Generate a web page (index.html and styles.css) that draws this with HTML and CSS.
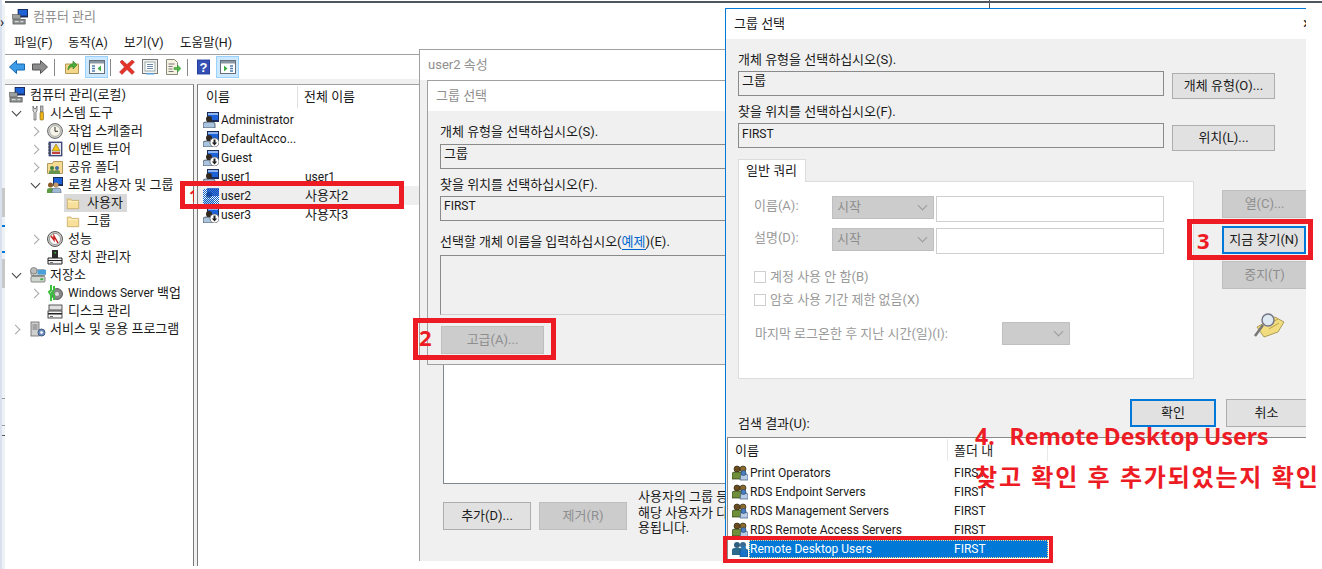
FILE: index.html
```html
<!DOCTYPE html>
<html lang="ko">
<head>
<meta charset="utf-8">
<title>컴퓨터 관리</title>
<link rel="stylesheet" href="styles.css">
</head>
<body>
<svg class="sprite" xmlns="http://www.w3.org/2000/svg">
  <defs>
    <pattern id="dith" width="2" height="2" patternUnits="userSpaceOnUse"><rect width="2" height="2" fill="#fff"/><rect width="1" height="1" fill="#0a5fc4"/><rect x="1" y="1" width="1" height="1" fill="#0a5fc4"/></pattern>
  </defs>
  <symbol id="i-user" viewBox="0 0 16 16">
    <rect x="4" y="0" width="12" height="10" fill="#1c2c58"/><rect x="5" y="1" width="10" height="7" fill="#1e62d8"/><rect x="5" y="1" width="10" height="2" fill="#8fb4ee"/>
    <path d="M0 16V12q0-2 3-2h6q3 0 3 2v4z" fill="#a9c4dc" stroke="#3c4a5a" stroke-width=".8"/>
    <circle cx="6" cy="7" r="3" fill="#33291f"/>
  </symbol>
  <symbol id="i-user-down" viewBox="0 0 16 16">
    <use href="#i-user"/>
    <circle cx="11.5" cy="11.5" r="4.5" fill="#fff" stroke="#555" stroke-width=".7"/>
    <path d="M10.5 8.5h2v3h1.700l-2.700 3-2.700-3h1.700z" fill="#222"/>
  </symbol>
  <symbol id="i-user-sel" viewBox="0 0 16 16">
    <rect y="1" width="16" height="15" fill="url(#dith)"/><rect x="4" y="0" width="12" height="8" fill="#0a48c0" opacity=".75"/><circle cx="6" cy="7" r="3" fill="#083a90" opacity=".7"/><rect x="1" y="11" width="10" height="5" fill="#0a5fc4" opacity=".35"/>
  </symbol>
  <symbol id="i-group" viewBox="0 0 16 16">
    <circle cx="5" cy="4" r="3" fill="#6b4a1e" stroke="#2c2a16" stroke-width=".7"/><circle cx="11" cy="4" r="3" fill="#8a6a2e" stroke="#2c2a16" stroke-width=".7"/>
    <path d="M0 14V9q0-2 3-2h5q3 0 3 2v5z" fill="#6f8f3a" stroke="#2c3a16" stroke-width=".7"/>
    <path d="M9 9h4q3 0 3 2v4H8z" fill="#b7cbe4" stroke="#3a5a80" stroke-width=".7"/>
    <circle cx="11.500" cy="8" r="2.500" fill="#4a7ec0" stroke="#20406a" stroke-width=".6"/>
  </symbol>
  <symbol id="i-group-sel" viewBox="0 0 16 16">
    <circle cx="5" cy="4" r="3" fill="#2f5f80"/><circle cx="11" cy="4" r="3" fill="#376a94"/>
    <path d="M0 14V9q0-2 3-2h5q3 0 3 2v5z" fill="#2c6a8c"/>
    <path d="M8 10q0-2 3-2h2q3 0 3 2v6H8z" fill="#1673c8" stroke="#12466e" stroke-width=".6"/>
    <circle cx="11.500" cy="7.500" r="2.500" fill="#2a78b8"/>
  </symbol>
  <symbol id="i-folder" viewBox="0 0 16 16">
    <path d="M1.500 14.500v-11h4l1 1.500h8v9.500z" fill="#f9e09a" stroke="#c8ad6a"/><rect x="2" y="6" width="12" height="1" fill="#fff3cb"/>
  </symbol>
  <symbol id="i-pc" viewBox="0 0 17 17">
    <rect x="6" y="0" width="11" height="9" fill="#1c2c58"/><rect x="7" y="1" width="9" height="6" fill="#1e62d8"/>
    <rect x="0" y="6" width="9" height="4" fill="#9aa0a0" stroke="#444" stroke-width=".6"/><rect x="1" y="11" width="13" height="5" fill="#8a8f8f" stroke="#444" stroke-width=".6"/><rect x="3" y="13" width="4" height="1" fill="#eee"/><rect x="9" y="13" width="3" height="1" fill="#eee"/>
  </symbol>
  <symbol id="i-tools" viewBox="0 0 16 16">
    <path d="M3 1v5l1 1v8h2V7l1-1V1L6 3.500H4z" fill="#ddd" stroke="#555" stroke-width=".7"/>
    <rect x="10.500" y="1" width="2.500" height="6" fill="#bbb" stroke="#555" stroke-width=".6"/><rect x="10" y="7" width="3.500" height="8" rx="1" fill="#edb41c" stroke="#7c5c10" stroke-width=".6"/>
  </symbol>
  <symbol id="i-clock" viewBox="0 0 16 16">
    <circle cx="8" cy="8" r="7.400" fill="#d4d4d0" stroke="#666"/><circle cx="8" cy="8" r="5.400" fill="#f6f4e8" stroke="#999" stroke-width=".7"/><path d="M8 4v4.300h3" fill="none" stroke="#333"/>
  </symbol>
  <symbol id="i-event" viewBox="0 0 16 16">
    <rect x="2" y="1" width="13" height="14" fill="#4c5a90" stroke="#2c3460" stroke-width=".7"/><rect x="4" y="2" width="10" height="12" fill="#e4e6f0"/><path d="M1 3h2M1 6h2M1 9h2M1 12h2" stroke="#444"/><path d="M9 3l4 7H5z" fill="#f5c518" stroke="#8a6a10" stroke-width=".6"/><rect x="5" y="11" width="8" height="2" fill="#c04040"/>
  </symbol>
  <symbol id="i-share" viewBox="0 0 16 16">
    <path d="M.5 14.500v-10h5l1-2h9v12z" fill="#f6dc92" stroke="#b09a60"/>
    <circle cx="5" cy="9" r="2" fill="#3f7f3f"/><circle cx="10" cy="9" r="2" fill="#3f6fa8"/><path d="M2 15v-2q0-2 3-2t3 2v2zM7 15v-2q0-2 3-2t3 2v2z" fill="#67934f"/>
  </symbol>
  <symbol id="i-users" viewBox="0 0 16 16">
    <rect x="6" y="0" width="10" height="9" fill="#1c2c58"/><rect x="7" y="1" width="8" height="6" fill="#1e62d8"/>
    <circle cx="3.500" cy="8" r="2.500" fill="#8a5a2a"/><path d="M0 16v-3q0-2 3-2h2q2 0 2 2v3z" fill="#5f9a45"/>
    <circle cx="9" cy="8" r="2.500" fill="#c59868"/><path d="M5 16v-2q0-3 3-3h3q3 0 3 3v2z" fill="#9fb8d4" stroke="#456" stroke-width=".5"/>
  </symbol>
  <symbol id="i-perf" viewBox="0 0 16 16">
    <circle cx="8" cy="8" r="7.500" fill="#cfcfc8" stroke="#555"/><circle cx="8" cy="8" r="5.500" fill="#fff" stroke="#777" stroke-width=".7"/><path d="M4 5l3 4V5l4 7" fill="none" stroke="#c8201c" stroke-width="1.500"/>
  </symbol>
  <symbol id="i-device" viewBox="0 0 16 16">
    <rect x="5" y="1" width="6" height="9" fill="#2a2a2a"/><rect x="7.500" y="3" width="1.500" height="1.500" fill="#3fc04a"/><path d="M1 9h14v6H1z" fill="#f0f0f0" stroke="#222"/><rect x="1" y="11" width="14" height="1" fill="#222"/><rect x="3" y="13" width="3" height="1" fill="#777"/>
  </symbol>
  <symbol id="i-store" viewBox="0 0 17 17">
    <rect x="1" y="3" width="15" height="6" rx="1" fill="#cfd6cf" stroke="#555" stroke-width=".7"/><rect x="1" y="10" width="15" height="6" rx="1" fill="#cfd6cf" stroke="#555" stroke-width=".7"/><circle cx="4" cy="4" r="3.500" fill="#bcbcbc" stroke="#666" stroke-width=".7"/><rect x="8" y="3" width="9" height="5" fill="#4aa0d8"/><rect x="11" y="12" width="3" height="2" fill="#3fae46"/>
  </symbol>
  <symbol id="i-backup" viewBox="0 0 16 16">
    <circle cx="10" cy="9" r="5.500" fill="#888" stroke="#333" stroke-width=".7"/><circle cx="10" cy="9" r="2" fill="#ddd"/><path d="M4 0v5l-2 2 2 3V16M7 1v4l-2 3 2 2v5" fill="none" stroke="#3ac03c" stroke-width="2"/>
  </symbol>
  <symbol id="i-disk" viewBox="0 0 16 16">
    <rect x="2" y="2" width="13" height="5" fill="#e0e0e0" stroke="#333" stroke-width=".8"/><rect x="1" y="8" width="14" height="7" fill="#f4f4f4" stroke="#222" stroke-width=".8"/><rect x="1" y="10" width="14" height="1.500" fill="#222"/><rect x="3" y="13" width="3" height="1" fill="#666"/>
  </symbol>
  <symbol id="i-service" viewBox="0 0 16 16">
    <rect x="1" y="1" width="8" height="14" fill="#cfcfcf" stroke="#666" stroke-width=".8"/><path d="M2.500 4h5M2.500 6h5M2.500 8h5" stroke="#777"/><circle cx="11.500" cy="11.500" r="3.500" fill="#6f8fb8" stroke="#3c5a84"/><circle cx="11.500" cy="11.500" r="1.300" fill="#fff"/>
  </symbol>
  <symbol id="i-search" viewBox="0 0 32 26">
    <path d="M4 15L22 5l9 5-6 10-14 5z" fill="#f2dc80" stroke="#9a8a40" stroke-width=".8"/><path d="M14 13l11-6M16 17l10-6" stroke="#b8a048"/>
    <circle cx="15" cy="8" r="6" fill="#dfe9f2" stroke="#778" stroke-width="1.500"/><path d="M10 13L2 24" stroke="#777" stroke-width="2.500"/>
  </symbol>
</svg>

<div class="desk">
  <div class="topline"></div>
  <div class="topmark"></div>
  <div class="edge"><span class="edge-chev">›</span></div>

  <section class="win win-main">
    <header class="main-title"><svg class="ic16"><use href="#i-pc"/></svg><span>컴퓨터 관리</span></header>
    <nav class="menu"><span>파일(F)</span><span>동작(A)</span><span>보기(V)</span><span>도움말(H)</span></nav>
    <div class="toolbar">
      <svg class="tool-back" viewBox="0 0 16 14"><path d="M.5 7L7.500.5V4h8v6h-8v3.500z" fill="#3b9be6" stroke="#1668b0"/></svg>
      <svg class="tool-fwd" viewBox="0 0 16 14"><path d="M15.500 7L8.500.5V4h-8v6h8v3.500z" fill="#8c8c8c" stroke="#555"/></svg>
      <i class="sep"></i>
      <svg class="tool-up" viewBox="0 0 16 16"><path d="M1.500 14.500V5h13v9.500z" fill="#f3d68a" stroke="#b49a55"/><path d="M4 11c0-4 2-6 5-6V2l4 4-4 4V7.500C7 7.500 5 9 4 11z" fill="#4cae3a" stroke="#2b7a24" stroke-width=".6"/></svg>
      <span class="toggle"><svg viewBox="0 0 16 14"><rect x=".5" y=".5" width="15" height="13" fill="#fff" stroke="#67707a"/><rect x="1" y="1" width="14" height="2.500" fill="#8a96a2"/><path d="M3 6h3M3 8.500h3M3 11h3" stroke="#4f7eb0" stroke-width="1.300"/><path d="M12 5.500v6l-3.500-3z" fill="#3fae46"/></svg></span>
      <i class="sep"></i>
      <svg class="tool-x" viewBox="0 0 16 16"><path d="M1 3l2-2 5 4.500L13 1l2.500 2L10.500 8l5 5-2.500 2.500L8 10.500 3 15.500 .5 13l5-5z" fill="#e5332a" stroke="#a8201c" stroke-width=".5"/></svg>
      <svg class="tool-doc" viewBox="0 0 16 16"><rect x=".5" y=".5" width="15" height="14" fill="#f2f2ee" stroke="#777"/><rect x="3" y="3" width="10" height="9" fill="#fff" stroke="#9aa"/><path d="M5 5.500h6M5 7.500h6M5 9.500h6" stroke="#6f8aa8"/><rect x="4" y="14" width="8" height="1.500" fill="#5aa0dc"/></svg>
      <svg class="tool-exp" viewBox="0 0 16 16"><path d="M1.500.5h8l3 3V15.500h-11z" fill="#f6f2e2" stroke="#8a8a7a"/><path d="M3.500 5h6M3.500 7.500h4M3.500 10h4M3.500 12.500h5" stroke="#777"/><path d="M9 8.500h3.500V6l3.500 3.500-3.500 3.500v-2.500H9z" fill="#4cbc46" stroke="#2b8a2a" stroke-width=".5"/></svg>
      <i class="sep"></i>
      <svg class="tool-help" viewBox="0 0 14 16"><rect width="14" height="16" fill="#23409c"/><rect x="1" y="1" width="12" height="14" fill="#3550b4"/><text x="7" y="13" text-anchor="middle" class="qm">?</text></svg>
      <span class="toggle"><svg viewBox="0 0 16 14"><rect x=".5" y=".5" width="15" height="13" fill="#fff" stroke="#67707a"/><rect x="1" y="1" width="14" height="2.500" fill="#8a96a2"/><path d="M10 6h3M10 8.500h3M10 11h3" stroke="#4f7eb0" stroke-width="1.300"/><path d="M4 5.500v6l3.500-3z" fill="#3fae46"/></svg></span>
    </div>
    <div class="main-body">
      <ul class="tree">
        <li class="lv0"><svg class="ic16"><use href="#i-pc"/></svg><span>컴퓨터 관리(로컬)</span></li>
        <li class="lv1"><i class="chev down"></i><svg class="ic16"><use href="#i-tools"/></svg><span>시스템 도구</span></li>
        <li class="lv2"><i class="chev"></i><svg class="ic16"><use href="#i-clock"/></svg><span>작업 스케줄러</span></li>
        <li class="lv2"><i class="chev"></i><svg class="ic16"><use href="#i-event"/></svg><span>이벤트 뷰어</span></li>
        <li class="lv2"><i class="chev"></i><svg class="ic16"><use href="#i-share"/></svg><span>공유 폴더</span></li>
        <li class="lv2"><i class="chev down"></i><svg class="ic16"><use href="#i-users"/></svg><span>로컬 사용자 및 그룹</span></li>
        <li class="lv3"><span class="tsel"><svg class="ic14"><use href="#i-folder"/></svg><span>사용자</span></span></li>
        <li class="lv3"><span class="tnosel"><svg class="ic14"><use href="#i-folder"/></svg><span>그룹</span></span></li>
        <li class="lv2"><i class="chev"></i><svg class="ic16"><use href="#i-perf"/></svg><span>성능</span></li>
        <li class="lv2"><i class="chev blank"></i><svg class="ic16"><use href="#i-device"/></svg><span>장치 관리자</span></li>
        <li class="lv1"><i class="chev down"></i><svg class="ic16"><use href="#i-store"/></svg><span>저장소</span></li>
        <li class="lv2"><i class="chev"></i><svg class="ic16"><use href="#i-backup"/></svg><span><span class="en">Windows Server</span> 백업</span></li>
        <li class="lv2"><i class="chev blank"></i><svg class="ic16"><use href="#i-disk"/></svg><span>디스크 관리</span></li>
        <li class="lv1"><i class="chev"></i><svg class="ic16"><use href="#i-service"/></svg><span>서비스 및 응용 프로그램</span></li>
      </ul>
      <div class="users">
        <div class="users-head"><span class="c1">이름</span><span class="c2">전체 이름</span></div>
        <div class="urow"><svg class="ic16"><use href="#i-user"/></svg><span class="c1 en">Administrator</span></div>
        <div class="urow"><svg class="ic16"><use href="#i-user-down"/></svg><span class="c1 en">DefaultAcco...</span></div>
        <div class="urow"><svg class="ic16"><use href="#i-user-down"/></svg><span class="c1 en">Guest</span></div>
        <div class="urow"><svg class="ic16"><use href="#i-user"/></svg><span class="c1 en">user1</span><span class="en">user1</span></div>
        <div class="urow sel"><svg class="ic16"><use href="#i-user-sel"/></svg><span class="c1 en">user2</span><span>사용자2</span></div>
        <div class="urow"><svg class="ic16"><use href="#i-user-down"/></svg><span class="c1 en">user3</span><span>사용자3</span></div>
      </div>
    </div>
  </section>

  <section class="win win-prop">
    <header class="prop-title">user2 속성</header>
    <div class="prop-body">
      <div class="prop-list"></div>
      <div class="prop-foot">
        <button class="btn btn-add">추가(D)...</button>
        <button class="btn off btn-add">제거(R)</button>
        <p class="note">사용자의 그룹 등록 정보 변경 사항은<br>해당 사용자가 다음에 로그온할 때 적<br>용됩니다.</p>
      </div>
    </div>
    <section class="win-sel-back">
      <header class="back-title">그룹 선택</header>
      <div class="back-body">
        <label class="lbl">개체 유형을 선택하십시오(S).</label>
        <div class="field">그룹</div>
        <label class="lbl lbl-2">찾을 위치를 선택하십시오(F).</label>
        <div class="field field-2 en">FIRST</div>
        <label class="lbl lbl-3">선택할 개체 이름을 입력하십시오(<a>예제</a>)(E).</label>
        <div class="namebox"></div>
        <button class="btn off btn-adv">고급(A)...</button>
      </div>
    </section>
  </section>

  <section class="win win-sel">
    <header class="sel-title"><span>그룹 선택</span><span class="close">×</span></header>
    <div class="sel-body">
      <div class="sel-row"><div class="sel-col"><label class="lbl">개체 유형을 선택하십시오(S).</label><div class="field">그룹</div></div><button class="btn btn-side">개체 유형(O)...</button></div>
      <div class="sel-row sel-row-2"><div class="sel-col"><label class="lbl">찾을 위치를 선택하십시오(F).</label><div class="field en">FIRST</div></div><button class="btn btn-side">위치(L)...</button></div>
      <div class="tab">일반 쿼리</div>
      <div class="query-wrap">
        <div class="query">
          <div class="q-row"><span class="q-lbl">이름(A):</span><span class="combo">시작<i class="cv"></i></span><span class="q-input"></span></div>
          <div class="q-row q-row-2"><span class="q-lbl">설명(D):</span><span class="combo">시작<i class="cv"></i></span><span class="q-input"></span></div>
          <div class="q-check q-check-1"><i class="box"></i>계정 사용 안 함(B)</div>
          <div class="q-check q-check-2"><i class="box"></i>암호 사용 기간 제한 없음(X)</div>
          <div class="q-last"><span class="q-last-lbl">마지막 로그온한 후 지난 시간(일)(I):</span><span class="combo combo-s"><i class="cv"></i></span></div>
        </div>
        <div class="q-btns">
          <button class="btn off btn-q">열(C)...</button>
          <button class="btn btn-q focus">지금 찾기(N)</button>
          <button class="btn off btn-q">중지(T)</button>
          <svg class="search-ic"><use href="#i-search"/></svg>
        </div>
      </div>
      <div class="ok-row"><button class="btn focus btn-ok">확인</button><button class="btn btn-cancel">취소</button></div>
      <label class="lbl lbl-res">검색 결과(U):</label>
    </div>
    <div class="results">
      <div class="r-head"><span class="r1">이름</span><span class="r2">폴더 내</span></div>
      <div class="r-row"><span class="r1"><svg class="ic16"><use href="#i-group"/></svg>Print Operators</span><span class="r2">FIRST</span></div>
      <div class="r-row"><span class="r1"><svg class="ic16"><use href="#i-group"/></svg>RDS Endpoint Servers</span><span class="r2">FIRST</span></div>
      <div class="r-row"><span class="r1"><svg class="ic16"><use href="#i-group"/></svg>RDS Management Servers</span><span class="r2">FIRST</span></div>
      <div class="r-row"><span class="r1"><svg class="ic16"><use href="#i-group"/></svg>RDS Remote Access Servers</span><span class="r2">FIRST</span></div>
      <div class="r-row r-sel"><svg class="ic16"><use href="#i-group-sel"/></svg><span class="r-bar"><span class="r1b">Remote Desktop Users</span><span class="r2">FIRST</span></span></div>
    </div>
  </section>

  <div class="mark m1"><b class="num num1">1</b></div>
  <div class="mark m2"><b class="num">2</b></div>
  <div class="mark m3"><b class="num">3</b></div>
  <div class="mark m4"></div>
  <p class="note4">4.&nbsp;&nbsp; Remote Desktop Users</p>
  <p class="note4b">찾고 확인 후 추가되었는지 확인</p>
</div>
</body>
</html>
```

FILE: styles.css
```css
* { box-sizing: border-box; }
html, body { margin: 0; padding: 0; background: #fff; }
body { font: 13px/16px Roboto, "Noto Sans CJK KR", sans-serif; color: #1a1a1a; }
.sprite { position: absolute; width: 0; height: 0; }
svg { display: block; flex: none; }
.ic16 { width: 16px; height: 16px; }
.ic14 { width: 14px; height: 14px; }
.en { font-size: 12px; }
p { margin: 0; }
ul { list-style: none; margin: 0; padding: 0; }
i { display: block; flex: none; }

.desk { position: relative; width: 1322px; height: 569px; overflow: hidden; background: #fff; }
.topline { height: 2px; margin-top: 1px; background: #4d5661; }
.topmark { position: absolute; left: 989px; top: 0; width: 1px; height: 8px; background: #4d5661; }
.edge { position: absolute; left: 0; top: 0; width: 5px; height: 569px; background: linear-gradient(90deg, #d9e1ee 0, #d9e1ee 2px, transparent 2px), linear-gradient(#fff 0, #fff 5px, #eef1f6 5px, #eef1f6 188px, #c8c8c8 188px, #c8c8c8 217px, #eef1f6 217px, #eef1f6 225px, #0078d7 225px, #0078d7 227px, #eef1f6 227px, #eef1f6 251px, #0078d7 251px, #0078d7 253px, #eef1f6 253px, #eef1f6 259px, #c8c8c8 259px, #c8c8c8 288px, #eef1f6 288px, #eef1f6 398px, #9a9a9a 398px, #9a9a9a 399px, #eef1f6 399px, #eef1f6 425px, #9a9a9a 425px, #9a9a9a 426px, #eef1f6 426px, #eef1f6 435px, #555 435px, #555 436px, #eef1f6 436px); }
.edge-chev { position: absolute; left: 0; top: 14px; font-size: 14px; color: #222; width: 5px; overflow: hidden; }

.win { position: absolute; background: #fff; }

/* main console window */
.win-main { left: 5px; top: 3px; width: 420px; height: 566px; }
.main-title { display: flex; align-items: center; gap: 5px; height: 27px; padding-left: 7px; color: #8e8e8e; }
.menu { display: flex; height: 24px; padding: 5px 0 0 9px; font-size: 12.500px; }
.menu span:nth-child(1) { width: 54px; }
.menu span:nth-child(2) { width: 56px; }
.menu span:nth-child(3) { width: 56px; }
.toolbar { display: flex; align-items: center; height: 25px; border-top: 1px solid #a0a0a0; padding-left: 4px; }
.toolbar svg { width: 16px; height: 16px; }
.sep { width: 1px; height: 17px; background: #888; }
.tool-back { margin-right: 7px; }
.tool-fwd { margin-right: 6px; }
.tool-up { margin: 0 5px 0 9px; }
.toggle { display: flex; align-items: center; justify-content: center; width: 23px; height: 22px; background: #cce8ff; border: 1px solid #99d1ff; }
.toggle + .sep { margin-left: 2px; }
.tool-x { margin: 0 7px 0 8px; }
.tool-doc { margin-right: 7px; }
.tool-exp { margin-right: 6px; }
.tool-help { margin: 0 6px 0 9px; width: 13px !important; }
.qm { font: bold 14px "Liberation Sans", sans-serif; fill: #fff; }
.main-body { display: flex; height: 487px; background: #f0f0f0; padding-top: 5px; gap: 3px; }
.tree { width: 189px; padding-top: 1px; background: #fff; border-top: 1px solid #a0a0a0; border-right: 1px solid #7a7a7a; }
.tree li { display: flex; align-items: center; height: 18px; white-space: nowrap; }
.lv0 { padding-left: 4px; gap: 5px; }
.lv1 { padding-left: 6px; }
.lv2 { padding-left: 25px; }
.lv3 { padding-left: 59px; }
.lv1 .chev { margin-right: 9px; }
.lv1 svg { margin-right: 4px; }
.lv2 svg { margin-right: 5px; }
.lv2 .chev { margin-right: 7px; }
.chev { position: relative; width: 10px; height: 10px; }
.chev::before { content: ""; position: absolute; left: 1px; top: 2px; width: 6px; height: 6px; border: solid #a6a6a6; border-width: 1.500px 1.500px 0 0; transform: rotate(45deg); }
.chev.down::before { left: 2px; top: 0; border-color: #404040; transform: rotate(135deg); }
.chev.blank::before { display: none; }
.tsel, .tnosel { display: flex; align-items: center; gap: 7px; width: 63px; height: 18px; padding-left: 2px; }
.tsel { background: #d9d9d9; }
.users { flex: 1; background: #fff; border-top: 1px solid #a0a0a0; border-left: 1px solid #7a7a7a; }
.users-head { display: flex; height: 25px; padding: 4px 0 0 8px; }
.users-head .c1 { width: 92px; height: 22px; border-right: 1px solid #e0e0e0; margin-top: -3px; padding-top: 3px; }
.users-head .c2 { padding-left: 6px; }
.urow { display: flex; align-items: center; height: 19px; padding-left: 5px; }
.urow svg { margin-right: 2px; }
.urow .c1 { width: 84px; }
.sel { background: #eee; }

/* property window */
.win-prop { left: 419px; top: 49px; width: 320px; height: 512px; border: 1px solid #a0a0a0; border-bottom: 0; background: #f0f0f0; }
.prop-title { height: 30px; background: #fff; padding: 7px 8px 0; color: #8e8e8e; }
.prop-body { padding: 9px 0 0 23px; height: 481px; }
.prop-list { height: 395px; background: #fff; border: 1px solid #7f878f; }
.prop-foot { display: flex; align-items: flex-start; gap: 8px; padding-top: 18px; }
.btn { display: block; flex: none; margin: 0; padding: 0; font: inherit; color: #1a1a1a; background: #e1e1e1; border: 1px solid #adadad; border-radius: 0; white-space: nowrap; }
.btn.off { background: #ccc; border-color: #bfbfbf; color: #8e8e8e; }
.btn.focus { border: 2px solid #0078d7; }
.btn-add { width: 88px; height: 28px; }
.note { margin: -13px 0 0 3px; line-height: 15.500px; white-space: nowrap; }
.win-sel-back { position: absolute; left: 7px; top: 30px; width: 320px; height: 285px; background: #f0f0f0; border: 1px solid #a0a0a0; border-right: 0; }
.back-title { height: 30px; padding: 7px 8px 0; background: #fff; color: #8e8e8e; }
.back-body { padding: 13px 0 0 12px; }
.lbl { display: block; height: 16px; white-space: nowrap; }
.field { height: 25px; margin-top: 4px; padding: 1px 3px 0; background: #f0f0f0; border: 1px solid #8a8a8a; }
.field-2 { margin-top: 3px; }
.lbl-2 { margin-top: 8px; }
.lbl-3 { margin-top: 13px; }
a { color: #0066cc; border-bottom: 1px solid #0066cc; }
.namebox { height: 60px; margin-top: 5px; border: 1px solid #8a8a8a; border-width: 1px 0 1px 1px; border-bottom-color: #d0d0d0; background: #f0f0f0; }
.btn-adv { width: 103px; height: 28px; margin: 11px 0 0 1px; }

/* front dialog */
.win-sel { left: 725px; top: 8px; width: 581px; height: 553px; background: #f0f0f0; border-top: 1px solid #0078d7; border-left: 1px solid #0078d7; }
.sel-title { display: flex; justify-content: space-between; height: 30px; padding: 7px 0 0 8px; background: #fff; }
.close { width: 3px; overflow: hidden; font-size: 16px; }
.sel-body { height: 398px; padding: 13px 0 0 12px; }
.sel-row { display: flex; gap: 8px; }
.sel-row-2 { margin-top: 5px; }
.sel-col { width: 426px; }
.sel-col .field { margin-top: 3px; }
.sel-row-2 .field { padding-top: 2px; }
.btn-side { width: 103px; height: 26px; margin-top: 21px; }
.tab { width: 68px; height: 23px; margin-top: 8px; padding: 3px 0 0 7px; background: #fff; border: 1px solid #dcdcdc; border-bottom: 0; position: relative; z-index: 1; margin-bottom: -1px; }
.query-wrap { display: flex; gap: 28px; }
.query { width: 456px; height: 198px; padding-top: 14px; background: #fff; border: 1px solid #dcdcdc; color: #9a9a9a; }
.q-row { display: flex; height: 26px; padding-left: 15px; }
.q-row-2 { margin-top: 6px; }
.q-lbl { width: 78px; padding-top: 2px; }
.combo { position: relative; display: block; width: 102px; height: 23px; padding: 2px 0 0 4px; background: #ccc; border: 1px solid #bfbfbf; color: #8e8e8e; }
.cv { position: absolute; right: 7px; top: 5px; width: 7px; height: 7px; border: solid #9a9a9a; border-width: 0 1px 1px 0; transform: rotate(45deg); }
.q-input { width: 228px; height: 26px; margin-left: 2px; border: 1px solid #cfcfcf; background: #fff; }
.q-check { display: flex; gap: 4px; align-items: center; padding-left: 15px; height: 16px; white-space: nowrap; }
.q-check-1 { margin-top: 15px; }
.q-check-2 { margin-top: 7px; }
.box { width: 12px; height: 12px; border: 1px solid #cfcfcf; background: #fff; }
.q-last { display: flex; align-items: center; padding-left: 16px; margin-top: 14px; }
.q-last-lbl { width: 247px; white-space: nowrap; }
.combo-s { width: 68px; }
.q-btns { padding-top: 9px; width: 84px; }
.btn-q { width: 84px; height: 28px; margin-bottom: 8px; border-right: 0; }
.btn-q + .btn-q + .btn-q { margin-top: -1px; }
.btn.focus.btn-q { border-right: 2px solid #0078d7; }
.search-ic { width: 32px; height: 26px; margin: 23px 0 0 31px; }
.ok-row { display: flex; gap: 10px; margin: 20px 0 0 392px; }
.btn-ok { width: 86px; height: 28px; }
.btn-cancel { width: 80px; height: 28px; background: #e1e1e1; border-right: 0; }
.lbl-res { margin-top: -11px; }
.results { height: 124px; margin-left: 1px; background: #fff; border-top: 1px solid #8a8a8a; border-left: 1px solid #8a8a8a; }
.r-head { display: flex; height: 25px; padding-top: 4px; }
.r-head .r1 { width: 220px; height: 22px; padding: 4px 0 0 7px; border-right: 1px solid #e8e8e8; margin-top: -3px; }
.r-head .r2 { width: 100px; height: 22px; padding: 4px 0 0 6px; border-right: 1px solid #e8e8e8; margin-top: -3px; }
.r-row { display: flex; align-items: center; height: 19px; padding-left: 4px; font-size: 12px; }
.r-row .r1 { display: flex; align-items: center; gap: 2px; width: 222px; }
.r-bar { display: flex; align-items: center; width: 299px; height: 18px; margin-left: 1px; padding-left: 1px; background: #0078d7; color: #fff; outline: 1px dotted #ffd58a; outline-offset: -1px; }
.r1b { width: 204px; }

/* red annotations */
.mark { position: absolute; border: 5px solid #ed1c24; }
.m1 { left: 180px; top: 181px; width: 224px; height: 28px; }
.m2 { left: 413px; top: 318px; width: 143px; height: 42px; }
.m3 { left: 1187px; top: 219px; width: 126px; height: 41px; }
.m4 { left: 723px; top: 536px; width: 330px; height: 27px; border-width: 4px; }
.num { position: absolute; left: 1px; top: 2px; color: #ed1c24; font: bold 22px/24px "Noto Sans", sans-serif; }
.m3 .num { left: 5px; top: 4px; }
.num1 { left: 4px; top: -2px; font-size: 16px; width: 5px; overflow: hidden; }
.note4, .note4b { position: absolute; color: #ed1c24; font-weight: 700; white-space: nowrap; line-height: 30px; }
.note4 { left: 975px; top: 421px; font-family: "Noto Sans", sans-serif; font-size: 23px; word-spacing: -1px; }
.note4b { left: 975px; top: 461px; font-family: "Noto Sans CJK KR", sans-serif; font-size: 24px; letter-spacing: 1.800px; }
```
